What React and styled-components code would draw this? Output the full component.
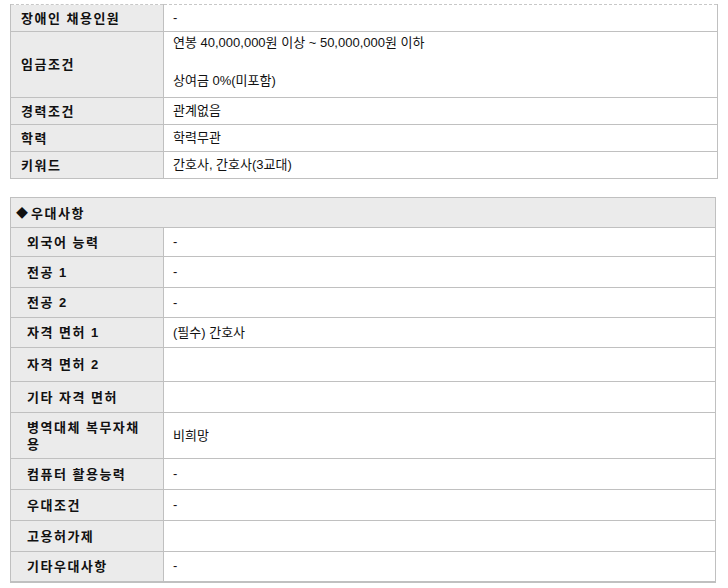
import React from "react";
import styled, { createGlobalStyle } from "styled-components";

const Global = createGlobalStyle`
  html, body { margin: 0; padding: 0; background: #fff; }
  body {
    font-family: "Liberation Sans", "Noto Sans CJK KR", sans-serif;
    font-size: 13px;
    color: #111;
  }
`;

const Page = styled.div`
  padding: 4px 0 0 10px;
`;

const InfoTable = styled.table`
  width: ${(p) => p.$width}px;
  border-collapse: collapse;
  table-layout: fixed;
  border-top: 1px ${(p) => (p.$dashedTop ? "dashed #c8c8c8" : "solid #c0c0c0")};
  border-left: 1px solid #c0c0c0;
  border-right: 1px solid #c0c0c0;
  border-bottom: ${(p) => (p.$thickBottom ? "2px" : "1px")} solid #c0c0c0;
  margin-bottom: ${(p) => p.$gap || 0}px;
`;

const LabelCol = styled.col`
  width: 153px;
`;

const ValueCol = styled.col``;

const Row = styled.tr`
  height: ${(p) => p.$h}px;
`;

const Label = styled.th`
  background: #ebebeb;
  border: 1px solid #c0c0c0;
  border-top: ${(p) => (p.$first ? "none" : "1px solid #c0c0c0")};
  text-align: left;
  vertical-align: middle;
  padding: 0 16px 0 ${(p) => p.$indent}px;
  font-weight: bold;
  font-size: 13px;
  letter-spacing: 1.5px;
  line-height: 17px;
  word-break: break-all;
  color: #111;
`;

const Value = styled.td`
  border: 1px solid #c0c0c0;
  border-top: ${(p) => (p.$first ? "none" : "1px solid #c0c0c0")};
  vertical-align: middle;
  padding: ${(p) => (p.$multi ? "0 9px 6px" : "0 9px")};
  font-size: 13px;
  line-height: ${(p) => (p.$multi ? "19px" : "16px")};
  color: #111;
`;

const Header = styled.th`
  background: #ebebeb;
  border: 1px solid #c0c0c0;
  border-top: none;
  text-align: left;
  padding: 0 0 0 5px;
  font-weight: bold;
  font-size: 13px;
  letter-spacing: 1.5px;
  color: #111;
`;

const Diamond = styled.span`
  font-size: 12px;
  margin-right: 3px;
  letter-spacing: 0;
`;

const topRows = [
  { label: "장애인 채용인원", value: "-", h: 27 },
  {
    label: "임금조건",
    value: ["연봉 40,000,000원 이상 ~ 50,000,000원 이하", "", "상여금 0%(미포함)"],
    h: 66,
  },
  { label: "경력조건", value: "관계없음", h: 27 },
  { label: "학력", value: "학력무관", h: 27 },
  { label: "키워드", value: "간호사, 간호사(3교대)", h: 27 },
];

const prefRows = [
  { label: "외국어 능력", value: "-", h: 29 },
  { label: "전공 1", value: "-", h: 31 },
  { label: "전공 2", value: "-", h: 30 },
  { label: "자격 면허 1", value: "(필수) 간호사", h: 30 },
  { label: "자격 면허 2", value: "", h: 34 },
  { label: "기타 자격 면허", value: "", h: 31 },
  { label: "병역대체 복무자채용", value: "비희망", h: 46 },
  { label: "컴퓨터 활용능력", value: "-", h: 31 },
  { label: "우대조건", value: "-", h: 31 },
  { label: "고용허가제", value: "", h: 31 },
  { label: "기타우대사항", value: "-", h: 30 },
];

function renderValue(v) {
  if (Array.isArray(v)) {
    return v.map((line, i) => (
      <React.Fragment key={i}>
        {line}
        {i < v.length - 1 && <br />}
      </React.Fragment>
    ));
  }
  return v;
}

export default function App() {
  return (
    <>
      <Global />
      <Page>
        <InfoTable $width={708} $dashedTop $gap={18}>
          <colgroup>
            <LabelCol />
            <ValueCol />
          </colgroup>
          <tbody>
            {topRows.map((r, i) => (
              <Row key={r.label} $h={r.h}>
                <Label $indent={10} $first={i === 0}>{r.label}</Label>
                <Value $first={i === 0} $multi={Array.isArray(r.value)}>
                  {renderValue(r.value)}
                </Value>
              </Row>
            ))}
          </tbody>
        </InfoTable>

        <InfoTable $width={706} $thickBottom>
          <colgroup>
            <LabelCol />
            <ValueCol />
          </colgroup>
          <tbody>
            <Row $h={30}>
              <Header colSpan={2}>
                <Diamond>◆</Diamond>우대사항
              </Header>
            </Row>
            {prefRows.map((r) => (
              <Row key={r.label} $h={r.h}>
                <Label $indent={16}>{r.label}</Label>
                <Value>{r.value}</Value>
              </Row>
            ))}
          </tbody>
        </InfoTable>
      </Page>
    </>
  );
}
